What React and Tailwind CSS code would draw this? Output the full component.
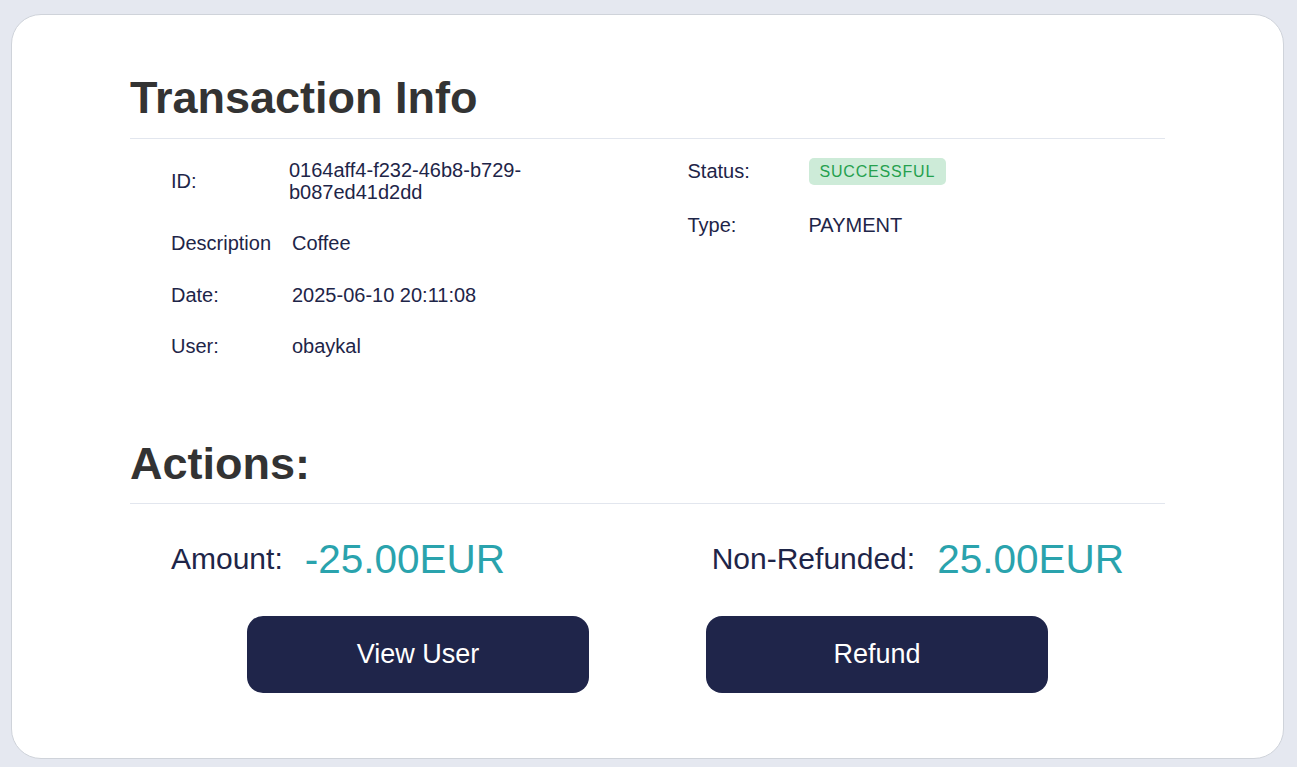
import React from 'react'

const infoLeft = [
  { label: 'ID:', value: '0164aff4-f232-46b8-b729-b087ed41d2dd', shift: true },
  { label: 'Description', value: 'Coffee' },
  { label: 'Date:', value: '2025-06-10 20:11:08' },
  { label: 'User:', value: 'obaykal' },
]

const Row = ({ label, children, tall }) => (
  <div className={`flex items-center ${tall ? 'py-[14px]' : 'py-[14.75px]'}`}>
    <div className='w-[121px] shrink-0'>{label}</div>
    {children}
  </div>
)

const App = () => {
  return (
    <div
      className='min-h-screen bg-[#e5e8f0] pt-[14px] pb-[8px] pl-[11px] pr-[13px]'
      style={{ fontFamily: '"Liberation Sans", Arial, sans-serif' }}
    >
      <div className='bg-white border border-[#cfd3da] rounded-[30px] h-[745px] px-[118px] pt-[57px]'>
        <h1 className='text-[45px] font-bold text-[#333333] leading-[1.15] pb-[14px] border-b border-[#e2e6ee]'>
          Transaction Info
        </h1>

        <div className='grid grid-cols-2 text-[20px] leading-[22px] text-[#1e2548] mt-[5px]'>
          {/* left column */}
          <div className='pl-[41px]'>
            {infoLeft.map((r) => (
              <Row key={r.label} label={r.label}>
                <div className={`w-[240px] ${r.shift ? '-ml-[3px]' : ''}`}>{r.value}</div>
              </Row>
            ))}
          </div>

          {/* right column */}
          <div className='pl-[40px]'>
            <Row label='Status:' tall>
              <span className='bg-[#cdebd8] text-[#25a04e] text-[16px] leading-[27px] tracking-[0.8px] px-[11px] rounded-[5px]'>
                SUCCESSFUL
              </span>
            </Row>
            <Row label='Type:'>
              <div>PAYMENT</div>
            </Row>
          </div>
        </div>

        <h1 className='mt-[66px] text-[45px] font-bold text-[#333333] leading-[1.15] pb-[13px] border-b border-[#e2e6ee]'>
          Actions:
        </h1>

        <div className='flex justify-between items-center px-[41px] mt-[32px] text-[#1e2548] leading-[1.15]'>
          <div className='flex items-center gap-[22px]'>
            <span className='text-[30px]'>Amount:</span>
            <span className='text-[40.5px] text-[#2aa3ad]'>-25.00EUR</span>
          </div>
          <div className='flex items-center gap-[22px]'>
            <span className='text-[30px]'>Non-Refunded:</span>
            <span className='text-[40.5px] text-[#2aa3ad]'>25.00EUR</span>
          </div>
        </div>

        <div className='flex justify-center gap-[117px] mt-[34px]'>
          <button className='w-[342px] h-[77px] rounded-[16px] bg-[#1f254a] text-white text-[27px]'>
            View User
          </button>
          <button className='w-[342px] h-[77px] rounded-[16px] bg-[#1f254a] text-white text-[27px]'>
            Refund
          </button>
        </div>
      </div>
    </div>
  )
}

export default App
